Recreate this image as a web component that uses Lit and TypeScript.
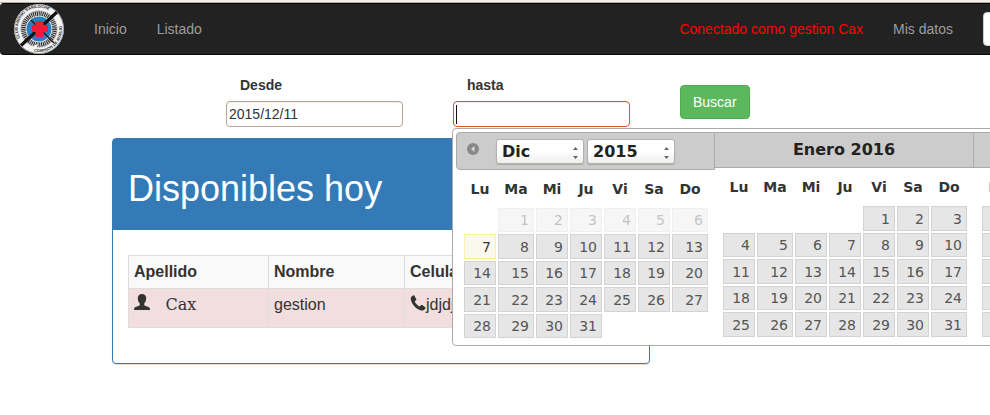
import { LitElement, html, css, svg, nothing } from "lit";
import { customElement } from "lit/decorators.js";

const DAY_NAMES = ["Lu", "Ma", "Mi", "Ju", "Vi", "Sa", "Do"];

@customElement("club-logo")
class ClubLogo extends LitElement {
  static styles = css`
    :host { display: block; width: 50px; height: 50px; }
    svg { display: block; width: 100%; height: 100%; }
    text { font: bold 4px "Liberation Sans", Arial, sans-serif; fill: #222; }
  `;
  render() {
    return html`<svg viewBox="0 0 50 50" role="img" aria-label="Club Andino Bariloche">
      <defs>
        <path id="upper" d="M6 34A21 21 0 0 1 40 10.200" />
        <path id="lower" d="M20 47.500A23 23 0 0 0 45.500 14.500" />
      </defs>
      <circle cx="25" cy="25" r="25" fill="#f4f4f4" />
      <circle cx="25" cy="25" r="24.500" fill="none" stroke="#777" stroke-width="0.6" />
      ${svg`
        <circle cx="25" cy="25" r="15.500" fill="none" stroke="#333" stroke-width="4.500" stroke-dasharray="1.2 0.7" />
        <circle cx="25" cy="25" r="18" fill="none" stroke="#666" stroke-width="1" stroke-dasharray="0.8 0.8" />
      `}
      <text><textPath href="#upper">CLUB ANDINO BARILOCHE</textPath></text>
      <text><textPath href="#lower">COMISION DE AUXILIO</textPath></text>
      <circle cx="25" cy="25" r="12.500" fill="#2b7fc0" />
      <path d="M7 41.500L43 8" stroke="#111" stroke-width="3.200" />
      <path d="M17 16L40 39" stroke="#222" stroke-width="1.600" />
      <path d="M19 42l5-2-2 6z" fill="#f4f4f4" />
      <path d="M21.500 17h8v4h4.500v7h-4.500v5h-8v-5H18v-7h3.500z" fill="#ee1c3a" />
    </svg>`;
  }
}

@customElement("month-grid")
class MonthGrid extends LitElement {
  static properties = {
    blanks: { type: Number },
    days: { type: Number },
    today: { type: Number },
    tall: { type: Boolean, reflect: true },
  };
  declare blanks: number;
  declare days: number;
  declare today: number;
  declare tall: boolean;

  constructor() {
    super();
    this.blanks = 0;
    this.days = 31;
    this.today = 0;
    this.tall = false;
  }

  static styles = css`
    :host { display: block; padding: 0 6px 0 7px; }
    table {
      width: 246px; table-layout: fixed; border-collapse: collapse;
      font: 14px "DejaVu Sans", Verdana, sans-serif; color: #333;
    }
    .wide { width: 38px; }
    th { height: 37px; padding: 0; text-align: center; font-weight: bold; }
    td { height: 26px; padding: 1px; box-sizing: border-box; }
    tbody tr:nth-child(even) td { height: 27px; }
    :host([tall]) tbody tr:nth-child(odd) td { height: 27px; }
    :host([tall]) tbody tr:nth-child(even) td { height: 26px; }
    .day {
      display: flex; align-items: center; justify-content: flex-end;
      width: 100%; height: 100%; box-sizing: border-box; margin: 0; padding: 0 4px;
      border: 1px solid #d3d3d3; background: #e6e6e6; color: #555; font: inherit;
    }
    .day:disabled { opacity: 0.35; }
    .today { border-color: #fcefa1; background: #fbf9ee; color: #363636; }
  `;

  render() {
    const cells: number[] = [];
    for (let i = 0; i < 35; i++) {
      const day = i - this.blanks + 1;
      cells.push(day > 0 && day <= this.days ? day : 0);
    }
    const weeks = [0, 7, 14, 21, 28].map((start) => cells.slice(start, start + 7));
    return html`<table>
      <colgroup><col /><col class="wide" /><col /><col /><col /><col /><col class="wide" /></colgroup>
      <thead><tr>${DAY_NAMES.map((n) => html`<th scope="col">${n}</th>`)}</tr></thead>
      <tbody>
        ${weeks.map((week) => html`<tr>${week.map((d) => html`<td>${d
          ? html`<button class="day ${d === this.today ? "today" : ""}" ?disabled=${d < this.today}>${d}</button>`
          : nothing}</td>`)}</tr>`)}
      </tbody>
    </table>`;
  }
}

@customElement("date-popup")
class DatePopup extends LitElement {
  static styles = css`
    :host {
      display: flex; align-items: flex-start; width: max-content; box-sizing: border-box;
      height: 218px; padding: 3px; border: 1px solid #aaa; border-radius: 4px; background: #fff;
      font-family: "DejaVu Sans", Verdana, sans-serif;
    }
    .group { width: 259px; }
    .head {
      display: flex; align-items: center; justify-content: center; box-sizing: border-box;
      height: 36px; border: 1px solid #aaa; border-left: 0; background: #ccc;
      color: #222; font-size: 16px; font-weight: bold;
    }
    .first { height: 38px; justify-content: flex-start; border-left: 1px solid #aaa; border-radius: 4px 0 0 4px; }
    .prev { width: 14px; height: 14px; margin: 0 16px 4px 9px; padding: 0; border: 0; background: none; }
    .prev svg, .pick svg { display: block; }
    .pick { display: grid; align-items: center; margin-right: 3px; width: 88px; }
    .pick select, .pick svg { grid-area: 1 / 1; }
    .pick svg { justify-self: end; margin-right: 5px; margin-top: 4px; pointer-events: none; }
    select {
      appearance: none; width: 100%; height: 25px; margin: 0; padding: 0 5px;
      border: 1px solid #b5b0aa; border-radius: 3px;
      background: linear-gradient(#fff, #fff 50%, #efeeed);
      box-shadow: 0 1px 1px #aaa;
      font: bold 16px "DejaVu Sans", Verdana, sans-serif; color: #222;
    }
  `;

  private picker(label: string, value: string) {
    return html`<span class="pick">
      <select aria-label=${label}><option>${value}</option></select>
      <svg width="7" height="14" viewBox="0 0 7 14" fill="#666"><path d="M1 4l2.500-3L6 4zM1 10h5l-2.500 3z" /></svg>
    </span>`;
  }

  render() {
    return html`
      <section class="group">
        <div class="head first">
          <button class="prev" aria-label="Anterior">
            <svg width="14" height="14" viewBox="0 0 14 14"><circle cx="7" cy="7" r="6" fill="#888" /><path d="M8.500 4v6L5 7z" fill="#ddd" /></svg>
          </button>
          ${this.picker("Mes", "Dic")}${this.picker("Año", "2015")}
        </div>
        <month-grid .blanks=${1} .days=${31} .today=${7}></month-grid>
      </section>
      <section class="group">
        <div class="head">Enero 2016</div>
        <month-grid tall .blanks=${4} .days=${31}></month-grid>
      </section>
      <section class="group">
        <div class="head">Febrero 2016</div>
        <month-grid tall .blanks=${0} .days=${29}></month-grid>
      </section>`;
  }
}

@customElement("app-root")
class AppRoot extends LitElement {
  static styles = css`
    :host {
      display: block; overflow: hidden; min-height: 100vh; background: #fff; color: #333;
      font: 14px/20px "Liberation Sans", Arial, sans-serif;
    }
    * { box-sizing: border-box; }
    .edge { height: 3px; background: #f2f1f0; border-bottom: 1px solid #b5aaa0; }
    .navbar {
      display: flex; align-items: center; height: 52px; padding-left: 14px;
      background: #222; border: solid #080808; border-width: 1px 0; border-radius: 4px 0 0 4px;
    }
    .navbar a { color: #9d9d9d; text-decoration: none; margin-left: 30px; white-space: nowrap; }
    .navbar .user { color: #f00; margin-left: auto; }
    .search {
      flex: none; width: 180px; height: 34px; margin: 0 -173px 0 30px;
      border: 1px solid #ccc; border-radius: 4px; background: #fff;
    }
    .filters { display: flex; align-items: flex-start; gap: 50px; padding: 20px 0 0 226px; }
    .field { position: relative; width: 177px; }
    .field label { display: block; padding-left: 14px; font-weight: bold; margin-bottom: 6px; }
    .field input {
      display: block; width: 100%; height: 26px; padding: 0 2px; border: 1px solid #b5a599;
      border-radius: 4px; background: #fff; font: inherit; color: #333; outline: none;
      box-shadow: inset 0 1px 1px #eee;
    }
    .field .active { border-color: #d9572b; }
    .caret { position: absolute; left: 3px; bottom: 3px; width: 1px; height: 19px; background: #111; }
    date-popup { position: absolute; left: -1px; top: 53px; z-index: 2; }
    .buscar {
      height: 34px; margin-top: 10px; padding: 0 12px; border: 1px solid #4cae4c; border-radius: 4px;
      background: #5cb85c; color: #fff; font: inherit;
    }
    .panel {
      width: 538px; margin: 11px 0 0 112px; border: 1px solid #337ab7; border-radius: 4px;
      box-shadow: 0 1px 1px #ddd;
    }
    .panel header { padding: 30px 15px 21px; background: #337ab7; color: #fff; }
    h1 { margin: 0; font-size: 36px; line-height: 40px; font-weight: normal; }
    .body { padding: 25px 15px 35px; }
    .people { width: 100%; table-layout: fixed; border-collapse: collapse; font-size: 16px; line-height: 22px; }
    .surname { width: 140px; }
    .name { width: 136px; }
    .people th, .people td { border: 1px solid #ddd; padding: 5px; text-align: left; vertical-align: top; }
    .people th { background: #f9f9f9; }
    .people td { background: #f2dede; height: 39px; }
    .serif { font-family: "DejaVu Serif", serif; margin-left: 11px; }
    .people svg { width: 16px; height: 16px; fill: #333; }
    .people .phone { vertical-align: -1px; }
  `;

  render() {
    return html`
      <div class="edge"></div>
      <nav class="navbar">
        <club-logo></club-logo>
        <a href="#inicio">Inicio</a>
        <a href="#listado">Listado</a>
        <a class="user" href="#usuario">Conectado como gestion Cax</a>
        <a href="#datos">Mis datos</a>
        <input class="search" type="search" aria-label="Buscar en el sitio" />
      </nav>
      <main>
        <form class="filters" @submit=${(e: Event) => e.preventDefault()}>
          <div class="field">
            <label for="desde">Desde</label>
            <input id="desde" type="text" value="2015/12/11" />
          </div>
          <div class="field">
            <label for="hasta">hasta</label>
            <input id="hasta" class="active" type="text" />
            <span class="caret"></span>
            <date-popup></date-popup>
          </div>
          <button class="buscar" type="submit">Buscar</button>
        </form>
        <section class="panel">
          <header><h1>Disponibles hoy</h1></header>
          <div class="body">
            <table class="people">
              <colgroup><col class="surname" /><col class="name" /><col /></colgroup>
              <thead><tr><th scope="col">Apellido</th><th scope="col">Nombre</th><th scope="col">Celular</th></tr></thead>
              <tbody><tr>
                <td><svg viewBox="0 0 16 16"><path d="M8 0C5.300 0 3.800 1.800 3.800 4.200c0 2.300.8 4 2 5.300v1.200c0 .5-.3.800-.8 1L1.500 13C.4 13.500 0 14 0 16h16c0-2-.4-2.500-1.500-3L11 11.700c-.5-.2-.8-.5-.8-1V9.500c1.200-1.300 2-3 2-5.300C12.200 1.800 10.700 0 8 0z" /></svg> <span class="serif">Cax</span></td>
                <td>gestion</td>
                <td><svg class="phone" viewBox="0 0 16 16"><path d="M3 .5C1.500 1.300.5 2.500.8 4.500c.7 4.700 5.800 10.200 10.700 11 1.700.2 3-.7 3.900-2 .3-.5.2-1-.2-1.300l-2.900-2.100c-.5-.3-1-.3-1.400.1l-1 1c-.3.300-.6.300-1 .1-1.600-1-3.100-2.600-4-4.200-.2-.4-.1-.7.200-1l.9-.9c.4-.4.500-.8.2-1.300L4.400.8C4.100.3 3.500.2 3 .5z" /></svg>jdjdjd</td>
              </tr></tbody>
            </table>
          </div>
        </section>
      </main>`;
  }
}
